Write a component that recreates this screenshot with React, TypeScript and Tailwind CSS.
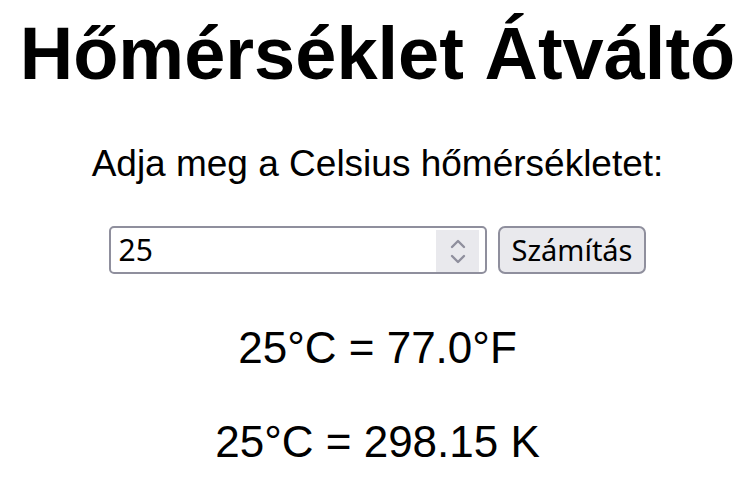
import { useState } from 'react'

export default function App() {
  const [value, setValue] = useState('25')
  const c = parseFloat(value) || 0

  return (
    <div className="w-[751px] h-[499px] pl-[4px] bg-white text-black text-center font-['Liberation_Sans',Arial,sans-serif] overflow-hidden">
      <h1 className="pt-[17px] text-[74px] leading-[74px] font-bold">Hőmérséklet Átváltó</h1>
      <p className="mt-[52px] text-[37px] leading-[42px]">Adja meg a Celsius hőmérsékletet:</p>

      <div className="mt-[41px] flex justify-center gap-[11px] font-['Noto_Sans',sans-serif]">
        <div className="flex items-stretch w-[378px] h-[48px] border-2 border-[#8f8f9d] rounded-[5px] bg-white">
          <input
            type="text"
            value={value}
            onChange={(e) => setValue(e.target.value)}
            className="flex-1 min-w-0 pl-[7px] text-[30px] leading-[44px] outline-none bg-transparent"
          />
          <div className="w-[43px] mt-[2px] mr-[6px] bg-[#e9e9ed] flex flex-col items-center justify-center gap-[5px]">
            <svg className="w-[18px] h-[10px]" viewBox="0 0 18 10" fill="none" stroke="#8f8f9d" strokeWidth={2.4} strokeLinecap="round" strokeLinejoin="round">
              <path d="M3 8l6-6 6 6" />
            </svg>
            <svg className="w-[18px] h-[10px]" viewBox="0 0 18 10" fill="none" stroke="#8f8f9d" strokeWidth={2.4} strokeLinecap="round" strokeLinejoin="round">
              <path d="M3 2l6 6 6-6" />
            </svg>
          </div>
        </div>
        <button className="h-[48px] px-[11px] border-2 border-[#8f8f9d] rounded-[7px] bg-[#e9e9ed] text-[29px] leading-[44px]">
          Számítás
        </button>
      </div>

      <p className="mt-[49px] text-[44px] leading-[50px]">{c}°C = {(c * 9 / 5 + 32).toFixed(1)}°F</p>
      <p className="mt-[44px] text-[44px] leading-[50px]">{c}°C = {(c + 273.15).toFixed(2)} K</p>
    </div>
  )
}
